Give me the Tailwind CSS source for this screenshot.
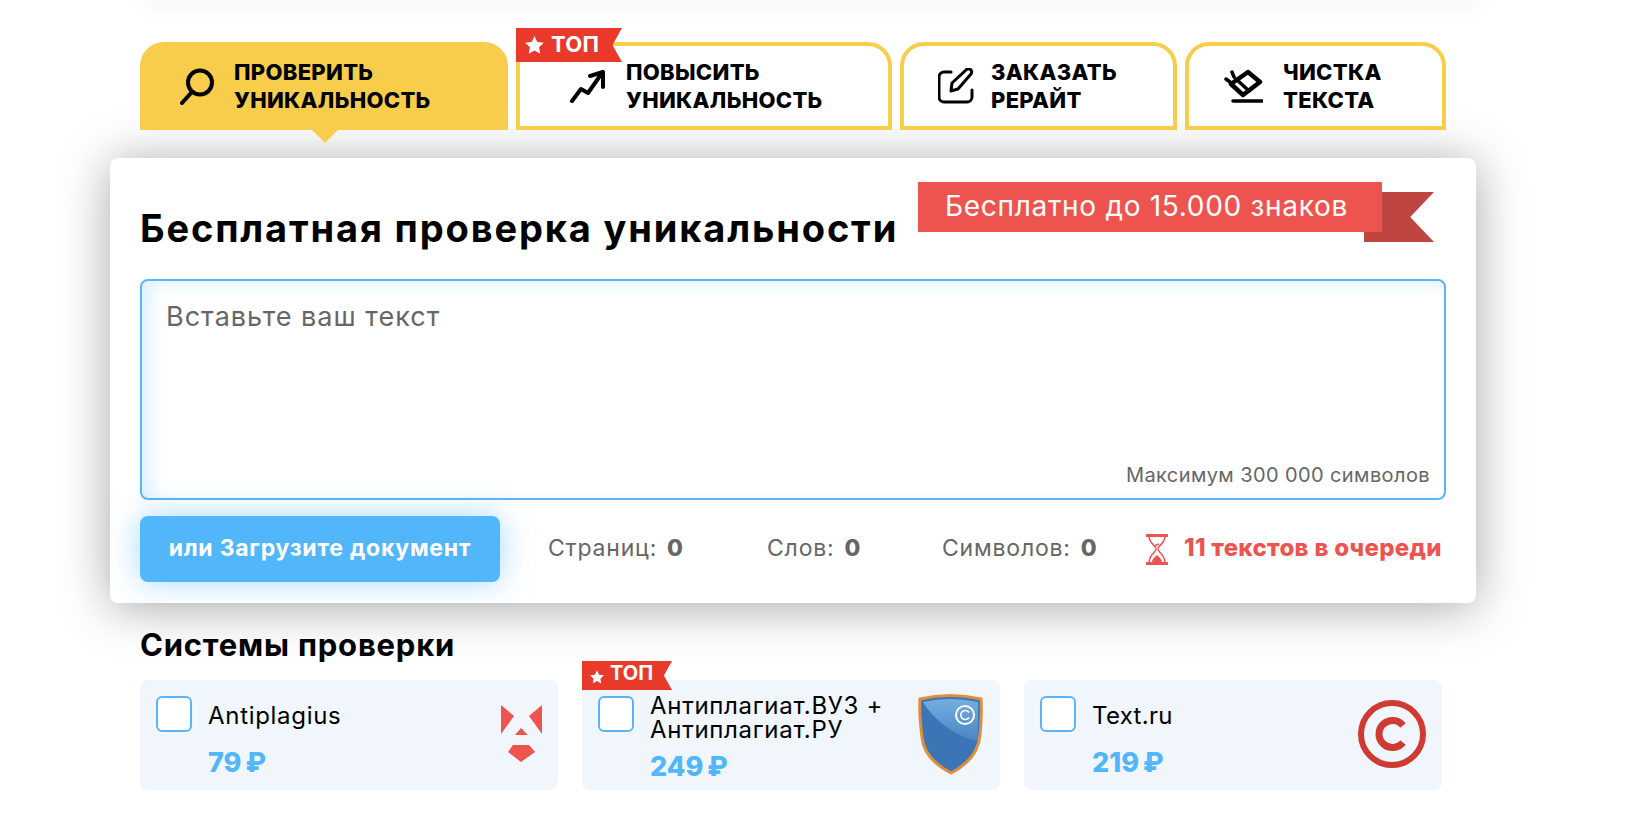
<!DOCTYPE html>
<html lang="ru">
<head>
  <meta charset="UTF-8" />
  <title>Проверка уникальности</title>
  <script src="https://cdn.jsdelivr.net/npm/@tailwindcss/browser@4"></script>
</head>
<body class="bg-white h-screen overflow-hidden font-['Inter',sans-serif] text-black">

  <!-- header edge -->
  <div class="h-0 mx-[150px] shadow-[0_0_20px_6px_rgba(0,0,0,0.06)]"></div>

  <main class="ml-[140px] w-[1306px] pt-[42px]">

    <!-- Tabs -->
    <nav class="relative z-10 flex gap-2 h-[88px] text-[22px] leading-[28px] font-extrabold tracking-[0.3px]">
      <a class="relative flex items-center w-[368px] pl-[40px] gap-[20px] rounded-t-[24px] bg-[#f7cd4b]">
        <svg width="34" height="37" viewBox="0 0 34 37" fill="none" stroke="#000" stroke-width="4" stroke-linecap="round"><circle cx="20" cy="14.500" r="12"/><path d="M2 35 11 25"/></svg>
        <span class="-mt-[1px]">ПРОВЕРИТЬ<br>УНИКАЛЬНОСТЬ</span>
        <span class="absolute left-[172px] top-full w-0 h-0 border-x-[13px] border-x-transparent border-t-[13px] border-t-[#f7cd4b]"></span>
      </a>
      <a class="relative flex items-center w-[376px] pl-[50px] gap-[21px] rounded-t-[24px] border-4 border-[#f7cd4b] bg-white">
        <svg width="35" height="33" viewBox="0 0 35 33" fill="none" stroke="#000" stroke-width="4" stroke-linecap="round" stroke-linejoin="round"><path d="M2 31 11 19l7 4L32 3"/><path d="M20 6 33 2v15"/></svg>
        <span class="-mt-[1px]">ПОВЫСИТЬ<br>УНИКАЛЬНОСТЬ</span>
        <!-- ribbon -->
        <span class="absolute -left-[4px] -top-[18px] flex items-center gap-[7px] w-[106px] h-[34px] pl-[9px] pb-[2px] bg-[#e8392b] text-white text-[22px] font-bold [clip-path:polygon(0_0,100%_0,91%_50%,100%_100%,0_100%)]">
          <svg class="mt-[2px]" width="19" height="18" viewBox="0 0 24 23" fill="#fff"><path d="M12 0l3.600 7.600 8.400 1-6.200 5.700 1.600 8.300L12 18.500l-7.400 4.100 1.600-8.300L0 8.600l8.400-1z"/></svg>
          ТОП
        </span>
      </a>
      <a class="flex items-center w-[277px] pl-[34px] gap-[17px] rounded-t-[24px] border-4 border-[#f7cd4b] bg-white">
        <svg width="36" height="36" viewBox="0 0 36 36" fill="none" stroke="#000" stroke-width="3" stroke-linecap="round" stroke-linejoin="round"><path d="M13 4H6a5 5 0 0 0-5 5v20a5 5 0 0 0 5 5h23a5 5 0 0 0 5-5v-7"/><path d="M13 23l1-8L28 2a3 3 0 0 1 5 4L20 21z"/></svg>
        <span class="-mt-[1px]">ЗАКАЗАТЬ<br>РЕРАЙТ</span>
      </a>
      <a class="flex items-center w-[261px] pl-[35px] gap-[20px] rounded-t-[24px] border-4 border-[#f7cd4b] bg-white">
        <svg width="39" height="34" viewBox="0 0 39 34" fill="none" stroke="#000" stroke-linecap="round" stroke-linejoin="round"><path stroke-width="4.500" d="M24 3 36 13 19 26 7 15z"/><path stroke-width="3.500" d="M12 10 25 22"/><path stroke-width="3.500" d="M9 32H38M2 10l4 3M8 3l2 5"/></svg>
        <span class="-mt-[1px]">ЧИСТКА<br>ТЕКСТА</span>
      </a>
    </nav>

    <!-- Main card -->
    <section class="relative -mx-[30px] mt-[28px] h-[445px] px-[30px] rounded-[8px] bg-white shadow-[0_4px_50px_rgba(0,0,0,0.35)]">
      <h1 class="pt-[46px] text-[38px] leading-[48px] font-bold tracking-[1.850px]">Бесплатная проверка уникальности</h1>

      <!-- free ribbon -->
      <div class="absolute left-[1254px] top-[34px] w-[70px] h-[50px] bg-[#bf4540] [clip-path:polygon(0_0,100%_0,66%_50%,100%_100%,0_100%)]"></div>
      <div class="absolute left-[808px] top-[24px] flex items-center w-[464px] h-[50px] pl-[27px] pb-[2px] bg-[#ee544f] text-white text-[28px] tracking-[0.700px]">Бесплатно до 15.000 знаков</div>

      <div class="relative mt-[27px]">
        <textarea placeholder="Вставьте ваш текст" class="block w-full h-[221px] resize-none px-[24px] py-[18px] rounded-[8px] border-2 border-[#5ab5f5] bg-white text-[27px] leading-[36px] tracking-[1px] placeholder:text-[#666] shadow-[inset_10px_4px_14px_rgba(82,182,251,0.18)] outline-none"></textarea>
        <span class="absolute right-[16px] bottom-[13px] text-[20px] leading-[24px] tracking-[0.400px] text-[#666]">Максимум 300 000 символов</span>
      </div>

      <div class="relative mt-[16px] flex items-center h-[66px] text-[23px] tracking-[0.800px] text-[#666]">
        <button class="w-[360px] h-full pb-[2px] rounded-[8px] bg-[#52b6fb] text-white font-bold tracking-[0.750px] shadow-[0_0_30px_rgba(82,182,251,0.5)]">или Загрузите документ</button>
        <span class="ml-[48px] w-[219px] pb-[2px] flex gap-[10px]"><span>Страниц:</span><b class="font-extrabold">0</b></span>
        <span class="w-[175px] pb-[2px] flex gap-[10px]"><span>Слов:</span><b class="font-extrabold">0</b></span>
        <span class="w-[204px] pb-[2px] flex gap-[10px]"><span>Символов:</span><b class="font-extrabold">0</b></span>
        <svg width="22" height="31" viewBox="0 0 22 31" fill="none" stroke="#ee544f" stroke-width="1.500"><path d="M0 1.500H22M0 29.500H22" stroke-width="3"/><path d="M3 2c0 8 7 9 7 13 0 4-7 5-7 14M19 2c0 8-7 9-7 13 0 4 7 5 7 14"/><path fill="#ee544f" stroke="none" d="M6 28c0-3 3-5 5-7 2 2 5 4 5 7z"/><path d="M8 12l5-2"/></svg>
        <span class="ml-[16px] pb-[2px] text-[24px] font-extrabold tracking-[0.300px] text-[#ee544f]">11 текстов в очереди</span>
      </div>
    </section>

    <!-- Systems -->
    <h2 class="mt-[22px] text-[31px] leading-[40px] font-bold tracking-[0.800px]">Системы проверки</h2>
    <div class="flex gap-[24px] mt-[15px] text-[24px] leading-[25px] tracking-[0.700px]">

      <label class="relative flex w-[418px] h-[110px] pl-[16px] pt-[16px] rounded-[8px] bg-[#f1f5fc]">
        <span class="w-[36px] h-[36px] rounded-[6px] border-2 border-[#5ab5f5] bg-white"></span>
        <div class="ml-[16px]">
          <div class="pt-[7px]">Antiplagius</div>
          <div class="mt-[19px] flex gap-[4px] text-[27px] leading-[32px] font-extrabold tracking-normal text-[#52b6fb]"><span>79</span><span>₽</span></div>
        </div>
        <svg class="absolute right-[16px] top-[25px]" width="41" height="57" viewBox="0 0 41 57" fill="#ee544f"><path d="M0 0 13 11 0 29zM41 0 28 11 41 29zM20 23l7 7H14zM12 40H28L34 47 20 57 7 47z"/></svg>
      </label>

      <label class="relative flex w-[418px] h-[110px] pl-[16px] pt-[16px] rounded-[8px] bg-[#f1f5fc]">
        <span class="w-[36px] h-[36px] rounded-[6px] border-2 border-[#5ab5f5] bg-white"></span>
        <div class="ml-[16px]">
          <div class="-mt-[2px] leading-[24px]">Антиплагиат.ВУЗ +<br>Антиплагиат.РУ</div>
          <div class="mt-[9px] flex gap-[4px] text-[27px] leading-[32px] font-extrabold tracking-normal text-[#52b6fb]"><span>249</span><span>₽</span></div>
        </div>
        <svg class="absolute right-[17px] top-[13px]" width="65" height="82" viewBox="0 0 65 82">
          <defs><linearGradient id="shieldTop" x1="0" y1="0" x2="0" y2="1"><stop offset="0" stop-color="#74aede"/><stop offset="1" stop-color="#4a85c4"/></linearGradient></defs>
          <path d="M2 6Q32-1 63 6 64 20 62 42 60 66 33 80 6 66 4 44 1 22 2 6z" fill="#3b75b5" stroke="#dd8f3f" stroke-width="3"/>
          <path d="M5 9Q32 3 60 9V48Q30 42 8 14z" fill="url(#shieldTop)"/>
          <circle cx="47" cy="22" r="9" fill="none" stroke="#fff" stroke-width="2"/>
          <path d="M51 19.500a4.500 4.500 0 1 0 0 5" fill="none" stroke="#fff" stroke-width="1.500"/>
        </svg>
        <span class="absolute left-0 -top-[19px] flex items-center gap-[6px] w-[90px] h-[29px] pl-[8px] pb-[4px] bg-[#e8392b] text-white text-[20px] font-bold tracking-normal [clip-path:polygon(0_0,100%_0,91%_50%,100%_100%,0_100%)]">
          <svg class="mt-[6px]" width="14" height="14" viewBox="0 0 24 23" fill="#fff"><path d="M12 0l3.600 7.600 8.400 1-6.200 5.700 1.600 8.300L12 18.500l-7.400 4.100 1.600-8.300L0 8.600l8.400-1z"/></svg>
          ТОП
        </span>
      </label>

      <label class="relative flex w-[418px] h-[110px] pl-[16px] pt-[16px] rounded-[8px] bg-[#f1f5fc]">
        <span class="w-[36px] h-[36px] rounded-[6px] border-2 border-[#5ab5f5] bg-white"></span>
        <div class="ml-[16px]">
          <div class="pt-[7px] tracking-[0.300px]">Text.ru</div>
          <div class="mt-[19px] flex gap-[4px] text-[27px] leading-[32px] font-extrabold tracking-normal text-[#52b6fb]"><span>219</span><span>₽</span></div>
        </div>
        <svg class="absolute right-[16px] top-[20px]" width="68" height="68" viewBox="0 0 68 68" fill="none" stroke="#cf3a32"><circle cx="34" cy="34" r="31" stroke-width="6"/><path d="M45 25.500a13.500 13.500 0 1 0 0 17" stroke-width="7"/></svg>
      </label>
    </div>
  </main>
</body>
</html>
